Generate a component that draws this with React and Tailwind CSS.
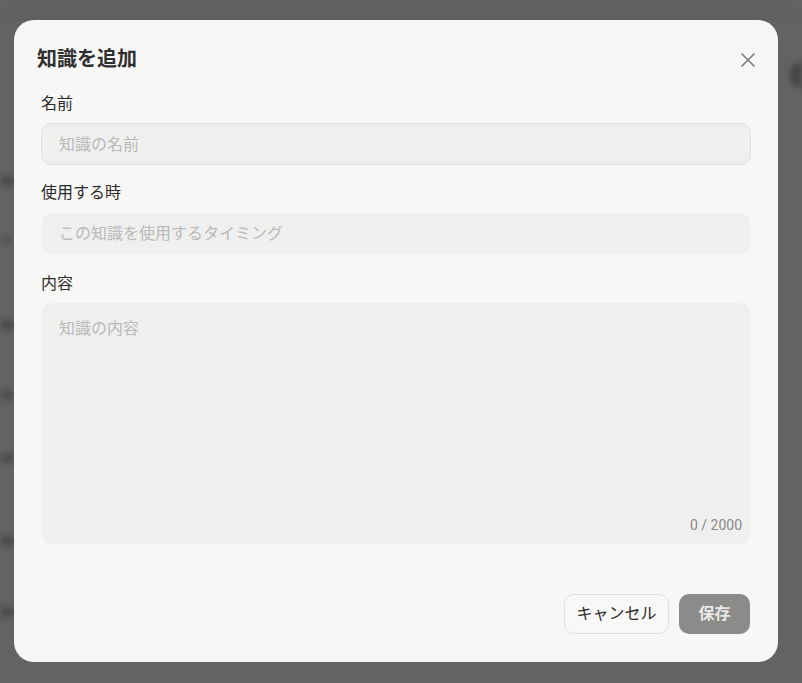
import React from "react";

export default function App() {
  const font = { fontFamily: 'Roboto, "Noto Sans CJK JP", "Noto Sans", sans-serif' };
  return (
    <div className="relative w-[802px] h-[683px] overflow-hidden bg-[#636363]" style={font}>
      {/* blurred background hints */}
      <div className="absolute left-0 top-[10px] w-[802px] h-[10px] bg-[#5a5a5a] blur-[4px] opacity-40" />
      <div className="absolute left-0 top-[176px] w-[14px] h-[10px] bg-[#4a4a4a] blur-[3px]" />
      <div className="absolute left-0 top-[236px] w-[14px] h-[8px] bg-[#555] blur-[3px]" />
      <div className="absolute left-0 top-[320px] w-[14px] h-[10px] bg-[#4a4a4a] blur-[3px]" />
      <div className="absolute left-0 top-[390px] w-[14px] h-[10px] bg-[#4d4d4d] blur-[3px]" />
      <div className="absolute left-0 top-[453px] w-[14px] h-[10px] bg-[#4d4d4d] blur-[3px]" />
      <div className="absolute left-0 top-[536px] w-[14px] h-[10px] bg-[#4a4a4a] blur-[3px]" />
      <div className="absolute left-0 top-[607px] w-[14px] h-[10px] bg-[#4a4a4a] blur-[3px]" />
      <div className="absolute right-0 top-[62px] w-[12px] h-[26px] bg-[#444] blur-[3px] rounded-l-full" />

      <div className="absolute left-[14px] top-[20px] w-[764px] h-[642px] rounded-[20px] bg-[#f7f7f5] flex flex-col pt-[25px] pb-[28px]">
        <div className="flex items-center justify-between pl-[23px] pr-[22px] h-[28px]">
          <h2 className="text-[20px] leading-[28px] font-bold text-[#2f2f2f]">知識を追加</h2>
          <svg width="16" height="16" viewBox="0 0 16 16" className="mt-[1px]">
            <path d="M2 2 L14 14 M14 2 L2 14" stroke="#7a7a7a" strokeWidth="1.6" strokeLinecap="round" />
          </svg>
        </div>
        <div className="flex flex-col px-[27px] mt-[20px]">
          <label className="text-[16px] leading-[22px] text-[#2b2b2b]">名前</label>
          <div className="mt-[8px] h-[42px] rounded-[10px] border border-[#e0e0de] bg-[#efefed] flex items-center px-[17px] pt-[1px] text-[16px] text-[#b9b9b7]">
            知識の名前
          </div>
          <label className="mt-[17px] text-[16px] leading-[22px] text-[#2b2b2b]">使用する時</label>
          <div className="mt-[9px] h-[41px] mx-[1px] rounded-[10px] bg-[#efefed] flex items-center px-[17px] pt-[1px] text-[16px] text-[#b9b9b7]">
            この知識を使用するタイミング
          </div>
          <label className="mt-[19px] text-[16px] leading-[22px] text-[#2b2b2b]">内容</label>
          <div className="mt-[8px] h-[241px] mx-[1px] rounded-[10px] bg-[#efefed] flex flex-col justify-between px-[17px] pt-[15px] pb-[9px]">
            <span className="text-[16px] leading-[22px] text-[#b9b9b7]">知識の内容</span>
            <span className="self-end -mr-[9px] text-[14px] leading-[20px] text-[#8a8a88]">0 / 2000</span>
          </div>
        </div>
        <div className="mt-auto flex justify-end gap-[10px] px-[28px]">
          <button className="h-[40px] w-[105px] rounded-[10px] border border-[#e0e0de] bg-[#f8f8f6] text-[16px] font-normal text-[#2b2b2b]">
            キャンセル
          </button>
          <button className="h-[40px] w-[71px] rounded-[10px] bg-[#8b8b89] text-[16px] font-bold text-[#e8e8e6]">
            保存
          </button>
        </div>
      </div>
    </div>
  );
}
